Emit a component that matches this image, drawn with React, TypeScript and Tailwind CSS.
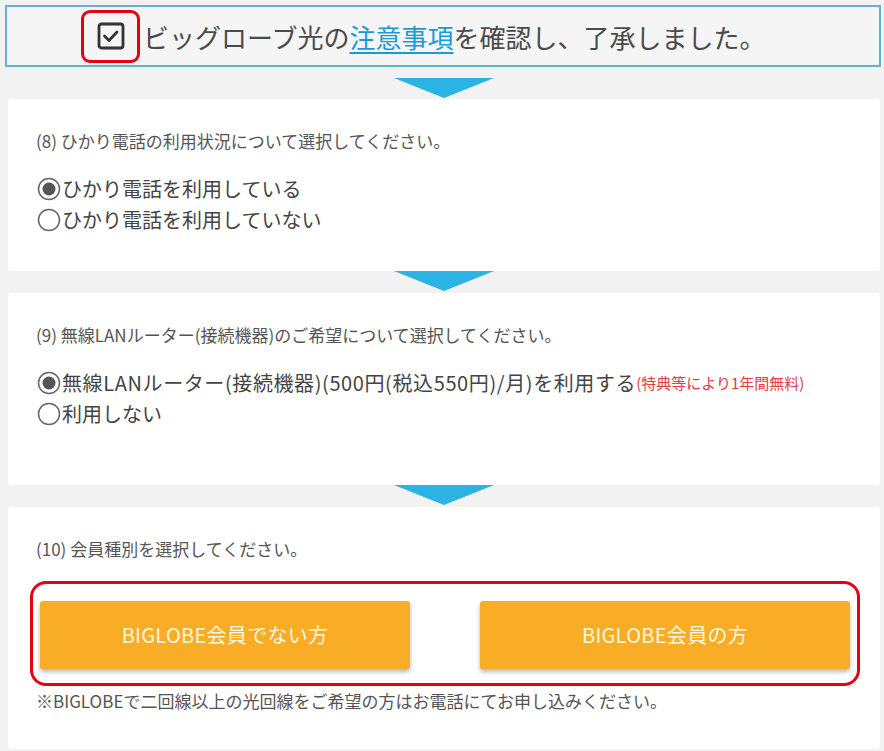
import React from 'react';

const font = { fontFamily: '"Noto Sans CJK JP", "Noto Sans", sans-serif' };

const DownArrow = () => (
  <div className="flex justify-center">
    <svg width="100" height="20" viewBox="0 0 100 20" className="block">
      <polygon points="0,0 100,0 50,20" fill="#2ab3e3" />
    </svg>
  </div>
);

const Radio = ({ checked }: { checked?: boolean }) => (
  <svg width="24" height="24" viewBox="0 0 24 24" className="shrink-0">
    <circle cx="12" cy="12" r="10.5" fill="#fff" stroke="#666" strokeWidth="1.5" />
    {checked && <circle cx="12" cy="12" r="6.5" fill="#555" />}
  </svg>
);

const Option = ({ checked, children }: { checked?: boolean; children: React.ReactNode }) => (
  <label className="flex items-center h-[31px] text-[20px] text-[#444] whitespace-nowrap">
    <span className="ml-[1px] mr-[1px]">
      <Radio checked={checked} />
    </span>
    {children}
  </label>
);

const Card = ({ className, children }: { className?: string; children: React.ReactNode }) => (
  <section className={`bg-white rounded-[3px] px-7 pt-[30px] ${className ?? ''}`}>{children}</section>
);

const Question = ({ children }: { children: React.ReactNode }) => (
  <p className="text-[17px] leading-6 text-[#555]">{children}</p>
);

const MemberButton = ({ label }: { label: string }) => (
  <button className="w-[370px] h-[68px] rounded-[3px] bg-[#f9ad27] text-[#fff6df] text-[20px] tracking-[0.3px] shadow-[0_3px_4px_rgba(0,0,0,0.28)]">
    {label}
  </button>
);

export default function App() {
  return (
    <div className="min-h-screen bg-[#f2f2f2] pl-2 pr-1 pt-[5px]" style={font}>
      {/* agreement box */}
      <div className="-ml-[3px] mr-[-1px] h-[62px] border-2 border-[#62b5c6] bg-[#f5f5f5] flex items-center pl-[74px]">
        <span className="flex items-center justify-center w-[59px] h-[53px] border-[3px] border-[#e60012] rounded-[9px]">
          <svg width="30" height="30" viewBox="0 0 30 30">
            <rect x="3" y="3" width="24" height="24" rx="2.5" fill="#f5f5f5" stroke="#333" strokeWidth="2.8" />
            <path d="M8.5 15 L13 19.5 L21 11" fill="none" stroke="#333" strokeWidth="2.8" strokeLinecap="round" strokeLinejoin="round" />
          </svg>
        </span>
        <span className="ml-[3px] text-[26px] text-[#4a4a4a] whitespace-nowrap">
          ビッグローブ光の
          <a className="text-[#1a9ad6] underline underline-offset-4">注意事項</a>
          を確認し、了承しました。
        </span>
      </div>

      <div className="mt-[11px] mb-[1px]">
        <DownArrow />
      </div>

      <Card className="pb-9">
        <Question>(8) ひかり電話の利用状況について選択してください。</Question>
        <div className="mt-5">
          <Option checked>ひかり電話を利用している</Option>
          <Option>ひかり電話を利用していない</Option>
        </div>
      </Card>

      <div className="mb-[2px]">
        <DownArrow />
      </div>

      <Card className="pb-14">
        <Question>(9) 無線LANルーター(接続機器)のご希望について選択してください。</Question>
        <div className="mt-5">
          <Option checked>
            <span className="tracking-[0.6px]">無線LANルーター(接続機器)(500円(税込550円)/月)を利用する</span>
            <span className="text-[15px] text-[#e33a46] self-end mb-[4px]">(特典等により1年間無料)</span>
          </Option>
          <Option>利用しない</Option>
        </div>
      </Card>

      <div className="mb-[2px]">
        <DownArrow />
      </div>

      <Card className="pb-[37px]">
        <Question>(10) 会員種別を選択してください。</Question>
        <div className="mt-5 -ml-[6px] w-[830px] border-[3px] border-[#e60012] rounded-[16px] px-[7px] pt-[17px] pb-[14px] flex justify-between">
          <MemberButton label="BIGLOBE会員でない方" />
          <MemberButton label="BIGLOBE会員の方" />
        </div>
        <p className="mt-1 text-[17px] leading-[22px] text-[#555]">
          ※BIGLOBEで二回線以上の光回線をご希望の方はお電話にてお申し込みください。
        </p>
      </Card>
    </div>
  );
}
